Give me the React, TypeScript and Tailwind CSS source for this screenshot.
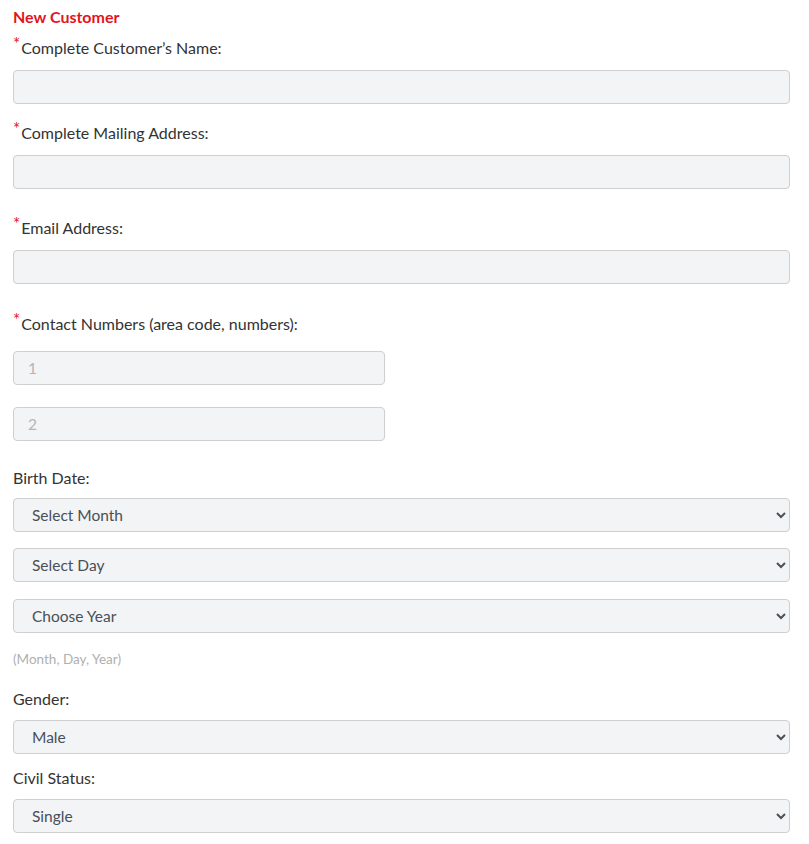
import React from "react";

const inputCls =
  "block h-[34px] rounded-[4px] border border-[#cfcfcf] bg-[#f3f4f6] px-[14px] text-[15.5px] text-[#495057] placeholder:text-[#b5b5b5] outline-none";

const selectCls =
  "block w-full h-[34px] rounded-[4px] border border-[#cfcfcf] bg-[#f3f4f6] pl-[14px] pr-[10px] text-[15.5px] text-[#495057] outline-none";

function Req({ children }: { children: React.ReactNode }) {
  return (
    <label className="flex h-[20px] items-start text-[16px] text-[#333] leading-[20px]">
      <span className="mt-[-2px] mr-[1px] h-[12px] leading-[16px] text-[#e4141f] text-[17px]">*</span>
      <span>{children}</span>
    </label>
  );
}

function Plain({ children }: { children: React.ReactNode }) {
  return <label className="block h-[20px] text-[16px] text-[#333] leading-[20px]">{children}</label>;
}

export default function App() {
  return (
    <div className="pl-[13px] pr-[19px] pt-[7px] pb-[12px] bg-white font-['Lato','Noto_Sans',sans-serif] text-[#333]">
      <h2 className="h-[20px] text-[16px] font-bold text-[#e4141f] leading-[20px]">New Customer</h2>

      <div className="mt-[11px]">
        <Req>Complete Customer’s Name:</Req>
        <input className={`${inputCls} w-full mt-[12px]`} />
      </div>

      <div className="mt-[19px]">
        <Req>Complete Mailing Address:</Req>
        <input className={`${inputCls} w-full mt-[12px]`} />
      </div>

      <div className="mt-[29px]">
        <Req>Email Address:</Req>
        <input className={`${inputCls} w-full mt-[12px]`} />
      </div>

      <div className="mt-[30px]">
        <Req>Contact Numbers (area code, numbers):</Req>
        <input className={`${inputCls} w-[372px] mt-[17px]`} placeholder="1" />
        <input className={`${inputCls} w-[372px] mt-[22px]`} placeholder="2" />
      </div>

      <div className="mt-[27px]">
        <Plain>Birth Date:</Plain>
        <select className={`${selectCls} mt-[10px]`} defaultValue="">
          <option value="">Select Month</option>
        </select>
        <select className={`${selectCls} mt-[16px]`} defaultValue="">
          <option value="">Select Day</option>
        </select>
        <select className={`${selectCls} mt-[17px]`} defaultValue="">
          <option value="">Choose Year</option>
        </select>
        <p className="mt-[18px] h-[16px] text-[13.5px] leading-[16px] text-[#b0b0b0]">(Month, Day, Year)</p>
      </div>

      <div className="mt-[22px]">
        <Plain>Gender:</Plain>
        <select className={`${selectCls} mt-[11px]`} defaultValue="Male">
          <option>Male</option>
          <option>Female</option>
        </select>
      </div>

      <div className="mt-[14px]">
        <Plain>Civil Status:</Plain>
        <select className={`${selectCls} mt-[11px]`} defaultValue="Single">
          <option>Single</option>
          <option>Married</option>
        </select>
      </div>
    </div>
  );
}
